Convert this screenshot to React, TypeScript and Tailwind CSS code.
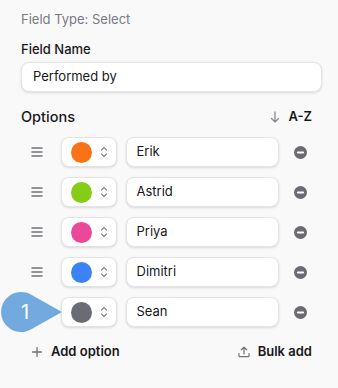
import React from "react";

const options = [
  { name: "Erik", color: "#f97316" },
  { name: "Astrid", color: "#84cc16" },
  { name: "Priya", color: "#ec4899" },
  { name: "Dimitri", color: "#3b82f6" },
  { name: "Sean", color: "#6b6b73" },
];

function DragHandle() {
  return (
    <svg width="12" height="10" viewBox="0 0 12 10" fill="none" stroke="#71717a" strokeWidth="1.3">
      <path d="M0.5 1h11M0.5 5h11M0.5 9h11" />
    </svg>
  );
}

function UpDown() {
  return (
    <svg width="8" height="12" viewBox="0 0 8 12" fill="none" stroke="#8a8a93" strokeWidth="1.3" strokeLinecap="round" strokeLinejoin="round">
      <path d="M1.5 4 4 1.5 6.5 4M1.5 8 4 10.5 6.5 8" />
    </svg>
  );
}

function MinusCircle() {
  return (
    <svg width="13" height="13" viewBox="0 0 13 13">
      <circle cx="6.5" cy="6.5" r="6.5" fill="#6b6b73" />
      <rect x="3" y="5.6" width="7" height="1.8" rx="0.6" fill="#fff" />
    </svg>
  );
}

function Callout() {
  return (
    <div className="absolute left-[-21px] top-1/2 -translate-y-1/2 w-[63px] h-[40px]">
      <svg width="63" height="40" viewBox="0 0 63 40" className="absolute inset-0">
        <path d="M62 20 L30.8 37.5 A20 20 0 1 1 30.8 2.5 Z" fill="#72a9de" />
      </svg>
      <span className="absolute left-[5px] w-[40px] top-0 h-[40px] flex items-center justify-center text-white text-[20px]">
        1
      </span>
    </div>
  );
}

export default function App() {
  return (
    <div
      className="w-[338px] h-[388px] bg-[#f9f9f9] pl-[21px] pr-[16px] pt-[10px]"
      style={{ fontFamily: "Inter, 'Noto Sans', sans-serif" }}
    >
      <p className="text-[13px] leading-[18px] text-[#7a7a82]">Field Type: Select</p>

      <p className="mt-[12px] text-[13px] leading-[18px] font-medium text-[#18181b]">Field Name</p>
      <div className="mt-[4px] h-[30px] rounded-[8px] bg-white border border-[#e4e4e7] shadow-sm flex items-center px-[11px] text-[13px] text-[#18181b]">
        Performed by
      </div>

      <div className="mt-[15px] flex items-center justify-between h-[20px]">
        <span className="text-[14.5px] font-medium text-[#18181b]">Options</span>
        <span className="flex items-center gap-[8px] pr-[10px]">
          <svg width="10" height="12" viewBox="0 0 10 12" fill="none" stroke="#8a8a93" strokeWidth="1.3" strokeLinecap="round" strokeLinejoin="round">
            <path d="M5 1v10M1.5 7.5 5 11l3.5-3.5" />
          </svg>
          <span className="text-[13px] font-semibold text-[#18181b]">A-Z</span>
        </span>
      </div>

      <div className="mt-[10px] flex flex-col gap-[10px]">
        {options.map((o, i) => (
          <div key={o.name} className="relative flex items-center h-[30px]">
            <div className="w-[32px] flex justify-center">
              {i < options.length - 1 && <DragHandle />}
            </div>
            <div className="ml-[9px] w-[56px] h-[30px] rounded-[8px] bg-white border border-[#e4e4e7] shadow-sm flex items-center pl-[9px] gap-[8px]">
              <span className="w-[21px] h-[21px] rounded-full" style={{ backgroundColor: o.color }} />
              <UpDown />
            </div>
            <div className="ml-[9px] w-[156px] h-[30px] rounded-[8px] bg-white border border-[#e4e4e7] shadow-sm flex items-center px-[10px] text-[13px] text-[#18181b]">
              {o.name}
            </div>
            <div className="w-[44px] flex justify-center">
              <MinusCircle />
            </div>
            {i === options.length - 1 && <Callout />}
          </div>
        ))}
      </div>

      <div className="mt-[15px] flex items-center justify-between pl-[11px] pr-[10px] h-[20px]">
        <span className="flex items-center gap-[9px]">
          <svg width="10" height="10" viewBox="0 0 10 10" fill="none" stroke="#71717a" strokeWidth="1.3" strokeLinecap="round">
            <path d="M5 0.5v9M0.5 5h9" />
          </svg>
          <span className="text-[13px] font-semibold text-[#18181b]">Add option</span>
        </span>
        <span className="flex items-center gap-[8px]">
          <svg width="12" height="12" viewBox="0 0 12 12" fill="none" stroke="#71717a" strokeWidth="1.2" strokeLinecap="round" strokeLinejoin="round">
            <path d="M6 8V1.2M3.3 3.8 6 1.2l2.7 2.6M1 7.5v2.2a1 1 0 0 0 1 1h8a1 1 0 0 0 1-1V7.5" />
          </svg>
          <span className="text-[13px] font-semibold text-[#18181b]">Bulk add</span>
        </span>
      </div>
    </div>
  );
}
